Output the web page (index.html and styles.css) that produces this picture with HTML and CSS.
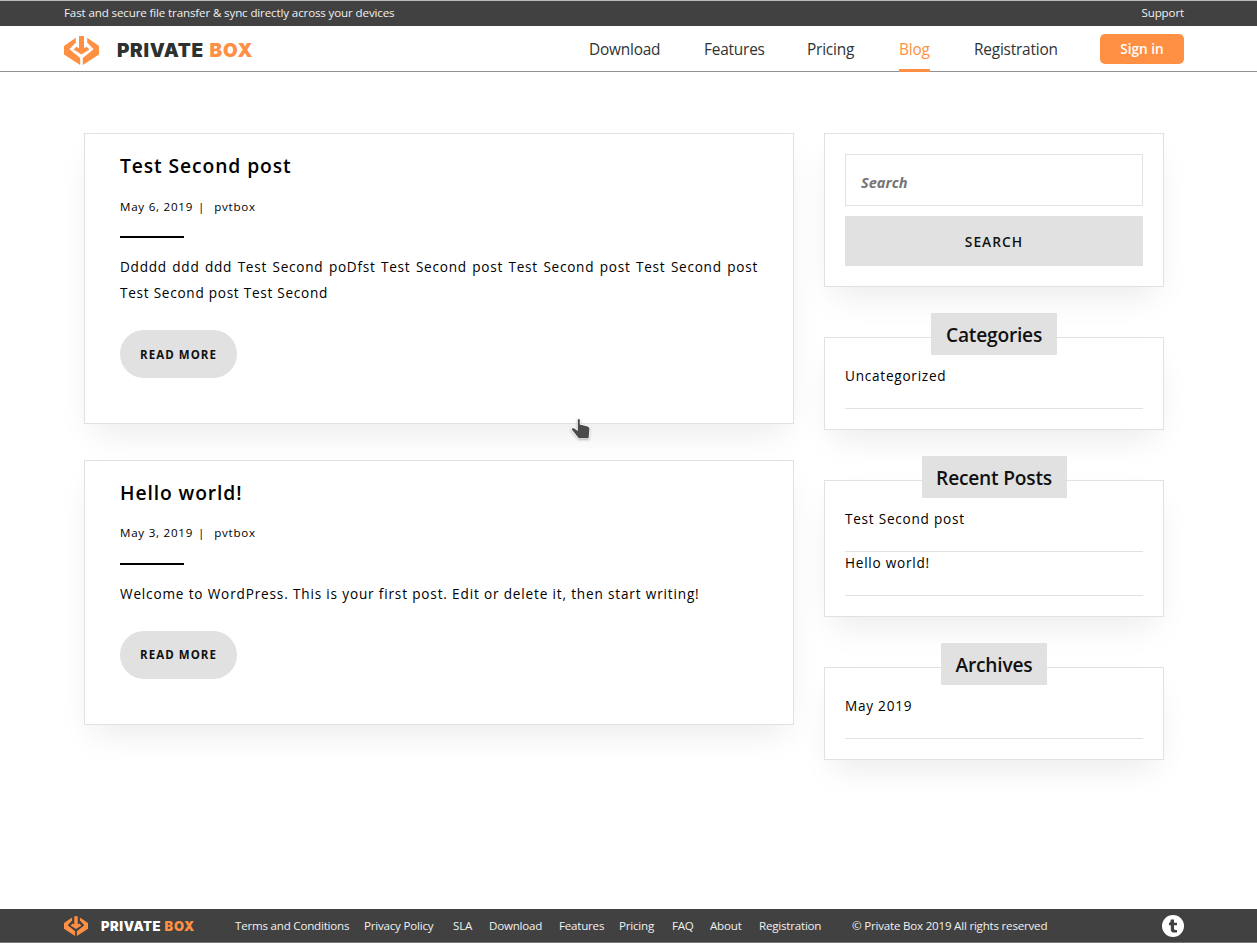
FILE: index.html
```html
<!DOCTYPE html>
<html lang="en">
<head>
<meta charset="utf-8">
<title>Private Box - Blog</title>
<link rel="stylesheet" href="styles.css">
</head>
<body>
<svg class="defs" width="0" height="0" aria-hidden="true">
  <symbol id="box-mark" viewBox="0 0 35 30">
    <path d="M11.8 1.8V6.4L5.4 13.2L16.2 22V29L0 18.4V10ZM23.2 1.8V6.4L29.6 13.2L18.8 22V29L35 18.4V10Z"/>
    <path d="M15 0H20V12.2L22.6 10.8L25.4 13.4L17.5 18.6L9.6 13.4L12.4 10.8L15 12.2Z"/>
  </symbol>
</svg>
<div class="page">
  <div class="topbar"><div class="wrap topbar-in"><span>Fast and secure file transfer &amp; sync directly across your devices</span><a>Support</a></div></div>
  <header class="header">
    <div class="wrap header-in">
      <a class="logo"><svg class="mark"><use href="#box-mark"/></svg><span class="brand"><span class="b1">PRIVATE</span><span class="b2">BOX</span></span></a>
      <nav class="nav"><a>Download</a><a>Features</a><a>Pricing</a><a class="active">Blog</a><a>Registration</a></nav>
      <a class="signin">Sign in</a>
    </div>
  </header>
  <main class="content">
    <section class="posts">
      <article class="card post">
        <h2>Test Second post</h2>
        <div class="meta"><span>May 6, 2019</span><span class="bar">|</span><span>pvtbox</span></div>
        <div class="rule"></div>
        <p>Ddddd ddd ddd Test Second poDfst Test Second post Test Second post Test Second post Test Second post Test Second</p>
        <a class="more">READ MORE</a>
      </article>
      <article class="card post second">
        <h2>Hello world!</h2>
        <div class="meta"><span>May 3, 2019</span><span class="bar">|</span><span>pvtbox</span></div>
        <div class="rule"></div>
        <p>Welcome to WordPress. This is your first post. Edit or delete it, then start writing!</p>
        <a class="more">READ MORE</a>
      </article>
    </section>
    <aside class="side">
      <div class="card search"><input type="text" placeholder="Search"><button>SEARCH</button></div>
      <div class="card widget"><h3 class="cat">Categories</h3><ul><li>Uncategorized</li></ul></div>
      <div class="card widget"><h3 class="rec">Recent Posts</h3><ul><li>Test Second post</li><li>Hello world!</li></ul></div>
      <div class="card widget"><h3 class="arc">Archives</h3><ul><li>May 2019</li></ul></div>
    </aside>
  </main>
  <footer class="footer">
    <div class="wrap footer-in">
      <a class="logo small"><svg class="mark"><use href="#box-mark"/></svg><span class="brand"><span class="b1">PRIVATE</span><span class="b2">BOX</span></span></a>
      <nav class="links"><a>Terms and Conditions</a><a>Privacy Policy</a><a>SLA</a><a>Download</a><a>Features</a><a>Pricing</a><a>FAQ</a><a>About</a><a>Registration</a></nav>
      <span class="copy">© Private Box 2019 All rights reserved</span>
      <svg class="social" viewBox="0 0 22 22"><circle cx="11" cy="11" r="11" fill="#fff"/><path d="M8.8 4.6H12V7.7H15V10.2H12V13.6Q12 15 13.3 15H15V17.6H12.4Q8.8 17.6 8.8 14.2V10.2H7V8.2Q8.8 7.6 8.8 4.6Z" fill="#414141"/></svg>
    </div>
  </footer>
  <svg class="pointer" viewBox="0 0 24 26"><path d="M8.8 3.6Q9.8 2.4 10.8 3.6V8.6L18.6 10.4Q20.4 11 20.4 12.8L19.6 22.2H9.8L2.8 13.6Q2.6 11.8 4.8 12.2L8.8 15Z" fill="#4a4a4a" stroke="#fff" stroke-width="1.6" paint-order="stroke"/></svg>
</div>
</body>
</html>
```
FILE: styles.css
```css
* { box-sizing: border-box; }
body { margin: 0; background: #fff; font-family: "Open Sans", "Noto Sans", sans-serif; color: #000; }
.defs { position: absolute; }
.page { position: relative; height: 943px; display: flex; flex-direction: column; overflow: hidden; }
.wrap { width: 1120px; margin-left: 64px; display: flex; align-items: center; }
.topbar { height: 26px; background: #414141; border-top: 1px solid #b9bdb9; color: #f0f0f0; font-size: 11.6px; line-height: 24px; letter-spacing: -.14px; }
.topbar-in { justify-content: space-between; }
.header { height: 46px; border-bottom: 1px solid #929292; }
.header-in { height: 46px; }
.logo { display: flex; align-items: center; width: 525px; }
.mark { width: 35px; height: 30px; fill: #ff8f43; margin-top: 3px; }
.brand { margin-left: 18px; display: flex; gap: 5.7px; font: 900 19px/24px Inter, sans-serif; letter-spacing: .65px; color: #2d312f; margin-top: 4px; }
.brand .b2 { color: #ff8f43; letter-spacing: 1px; }
.nav { display: grid; grid-template: 46px / 71px 59px 48px 31px 84px; column-gap: 44px; font-size: 15.4px; line-height: 48px; letter-spacing: -.2px; color: #303334; white-space: nowrap; }
.nav .active { color: #ff8f43; border-bottom: 3px solid #ff8f43; }
.signin { margin-left: 42px; width: 84px; height: 30px; border-radius: 5px; background: #ff8f43; color: #fff; text-align: center; font-size: 13.6px; font-weight: 550; line-height: 30px; }
.content { flex: 1; display: flex; gap: 30px; padding: 61px 0 0 84px; }
.posts { width: 710px; display: flex; flex-direction: column; gap: 36px; }
.card { border: 1px solid #e1e1e1; background: #fff; box-shadow: 0 16px 34px -9px rgba(0,0,0,.09); }
.post { padding: 17px 35px 45px; }
h2 { margin: 0; font-size: 19.3px; font-weight: 580; line-height: 30px; letter-spacing: .9px; }
.meta { display: flex; margin-top: 16px; font-size: 11.6px; line-height: 20px; letter-spacing: .75px; }
.bar { margin: 0 9px 0 5px; }
.rule { margin-top: 19px; width: 64px; height: 2px; background: #000; }
.second .meta { margin-top: 15px; }
.second .rule { margin-top: 20px; }
.post p { margin: 16px 0 0; font-size: 13.6px; line-height: 26px; letter-spacing: .73px; text-align: justify; }
.second p { letter-spacing: .83px; }
.more { display: block; margin-top: 24px; width: 117px; height: 48px; border-radius: 24px; background: #e1e1e1; color: #111; font-size: 11.5px; font-weight: 700; line-height: 49px; letter-spacing: 1.05px; text-align: center; }
.second .more { line-height: 48px; }
.side { width: 340px; }
.search { height: 154px; padding: 20px; display: flex; flex-direction: column; gap: 10px; }
.search input { height: 52px; border: 1px solid #e1e1e1; padding: 3px 15px 0; font: italic 700 14.6px "Open Sans", sans-serif; }
.search input::placeholder { color: #757575; }
.search button { height: 50px; border: 0; padding: 0; background: #e1e1e1; color: #111; font: 580 13.8px "Open Sans", sans-serif; letter-spacing: 1px; }
.widget { margin-top: 50px; padding: 0 20px 20px; }
h3 { margin: -25px auto 0; height: 42px; background: #e1e1e1; color: #111; text-align: center; font-size: 19.2px; font-weight: 580; line-height: 44px; letter-spacing: -.22px; }
.cat { width: 126px; }
.rec { width: 145px; }
.arc { width: 106px; }
ul { list-style: none; margin: 10px 0 0; padding: 0; }
li { height: 44px; border-bottom: 1px solid #e1e1e1; font-size: 13.6px; line-height: 22px; letter-spacing: .75px; }
.footer { height: 34px; background: #414141; border-bottom: 1px solid #777; color: #f0f0f0; font-size: 11.6px; line-height: 33px; letter-spacing: -.22px; white-space: nowrap; }
.footer-in { height: 33px; }
.small { width: 171px; }
.small .mark { width: 24px; height: 21px; margin-top: 1px; }
.small .brand { margin: 1px 0 0 13px; gap: 3.5px; font-size: 13px; line-height: 20px; letter-spacing: .55px; color: #fff; }
.small .brand .b2 { letter-spacing: .8px; }
.links { display: grid; grid-template-columns: 113px 73px 20px 54px 44px 37px 22px 33px 63px; column-gap: 16px; }
.copy { margin-left: 30px; width: 196px; }
.social { margin-left: auto; width: 22px; height: 22px; }
.pointer { position: absolute; left: 569px; top: 416px; width: 24px; height: 26px; filter: drop-shadow(0 1px 1px rgba(0,0,0,.25)); }
```
